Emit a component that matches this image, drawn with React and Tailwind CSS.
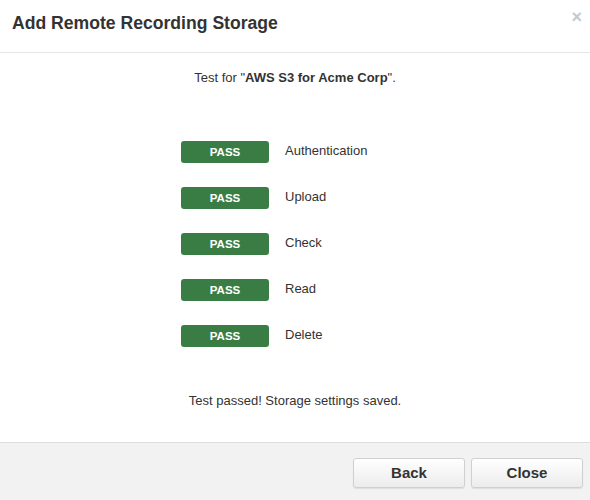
const tests = ['Authentication', 'Upload', 'Check', 'Read', 'Delete']

function PassBadge() {
    return (
        <span className="flex h-[22px] w-[88px] items-center justify-center rounded-[3px] bg-[#3a7d44] pt-[1px] text-[11.5px] font-bold text-white">
            PASS
        </span>
    )
}

export default function App() {
    return (
        <div className="flex h-[500px] w-[590px] flex-col bg-white font-['Liberation_Sans',Arial,sans-serif] text-[#333]">
            {/* Header */}
            <div className="relative h-[53px] shrink-0 border-b border-[#e5e5e5] px-3 pt-[12px]">
                <h1 className="text-[17.6px] font-bold leading-[22px] text-[#333]">Add Remote Recording Storage</h1>
                <button className="absolute right-[8px] top-[8px] text-[18px] font-bold leading-[18px] text-[#c8c8c8]">
                    ×
                </button>
            </div>

            {/* Body */}
            <div className="flex flex-1 flex-col items-center pt-[16px] text-[13px]">
                <p className="leading-[18px]">
                    Test for "<b>AWS S3 for Acme Corp</b>".
                </p>

                <div className="mt-[54px] flex flex-col gap-[24px]">
                    {tests.map((t) => (
                        <div key={t} className="flex items-center gap-[16px]">
                            <PassBadge />
                            <span className="w-[124px] leading-[18px] -mt-[2px]">{t}</span>
                        </div>
                    ))}
                </div>

                <p className="mt-[45px] leading-[18px]">Test passed! Storage settings saved.</p>
            </div>

            {/* Footer */}
            <div className="flex h-[58px] shrink-0 items-start justify-end gap-[6px] border-t border-[#dcdcdc] bg-[#f2f2f2] pr-[7px] pt-[15px]">
                <button className="h-[30px] w-[112px] rounded-[3px] border border-[#d0d0d0] bg-gradient-to-b from-white to-[#ececec] text-[15px] font-bold text-[#333] shadow-[0_1px_1px_rgba(0,0,0,0.08)]">
                    Back
                </button>
                <button className="h-[30px] w-[112px] rounded-[3px] border border-[#d0d0d0] bg-gradient-to-b from-white to-[#ececec] text-[15px] font-bold text-[#333] shadow-[0_1px_1px_rgba(0,0,0,0.08)]">
                    Close
                </button>
            </div>
        </div>
    )
}
